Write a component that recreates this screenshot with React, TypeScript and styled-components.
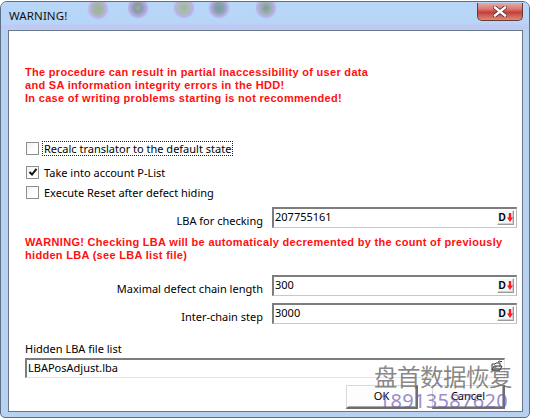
import React from "react";
import styled, { createGlobalStyle } from "styled-components";

const Global = createGlobalStyle`
  html, body { margin: 0; padding: 0; background: #ffffff; }
  body { width: 535px; height: 419px; overflow: hidden; font-family: "Noto Sans", "Open Sans", sans-serif; }
  * { box-sizing: border-box; }
`;

const Page = styled.div`
  position: relative;
  width: 535px;
  height: 419px;
  padding-top: 1px;
`;

const Window = styled.div`
  width: 530px;
  height: 417px;
  border: 1px solid #5d6f86;
  border-radius: 7px 7px 5px 5px;
  background: #b9d1f1;
  display: flex;
  flex-direction: column;
  padding: 0 6px 5px 7px;
  overflow: hidden;
`;

const TitleBar = styled.div`
  height: 28px;
  margin: 0 -6px 0 -7px;
  padding: 0 6px 0 8px;
  display: flex;
  align-items: flex-start;
  justify-content: space-between;
  background:
    radial-gradient(circle 11px at 97px 7px, #9fb29c 0, #a4b4a6 5px, #bdb4ee 9px, transparent 11px),
    radial-gradient(circle 11px at 137px 6px, #98ac9a 0, #8a9aa6 4px, #b8aeea 9px, transparent 11px),
    radial-gradient(circle 11px at 183px 6px, #a0b6a0 0, #a8bcb0 5px, #bab2ee 9px, transparent 11px),
    radial-gradient(circle 11px at 218px 6px, #7d97a6 0, #8aa2ac 5px, #b8b0ee 9px, transparent 11px),
    radial-gradient(circle 11px at 265px 6px, #7d97a6 0, #9ab0a6 5px, #bab0ee 9px, transparent 11px),
    linear-gradient(180deg, #b8d6f8 0%, #b7d5f7 75%, #c3c6f2 90%, #bcd0f2 100%);
`;

const Title = styled.span`
  margin-top: 6px;
  font-family: "Noto Sans", sans-serif;
  font-size: 11.5px;
  color: #111;
  letter-spacing: 0.1px;
`;

const CloseButton = styled.div`
  width: 46px;
  height: 18px;
  margin-top: 1px;
  border: 1px solid #6b3a36;
  border-top: none;
  border-radius: 0 0 5px 5px;
  background: linear-gradient(180deg, #e9a9a5 0%, #d87a72 35%, #c0403a 55%, #d46a5e 80%, #e08a6e 100%);
  display: flex;
  align-items: center;
  justify-content: center;
`;

const Client = styled.div`
  flex: 1;
  background: #ffffff;
  border: 1px solid #68788a;
  display: flex;
  flex-direction: column;
  padding: 0 0 0 16px;
`;

const RedText = styled.div<{ $top: number }>`
  margin-top: ${(p) => p.$top}px;
  font-family: "Liberation Sans", Arial, sans-serif;
  font-weight: bold;
  font-size: 11px;
  line-height: 13px;
  color: #ff1010;
  letter-spacing: 0.3px;
`;

const CheckRow = styled.div<{ $top: number }>`
  margin-top: ${(p) => p.$top}px;
  height: 20px;
  display: flex;
  align-items: center;
  gap: 3px;
`;

const Box = styled.div`
  width: 13px;
  height: 13px;
  margin-left: 1px;
  border: 1px solid #8e8f8f;
  background: linear-gradient(135deg, #f0f0f0 0%, #ffffff 60%);
  display: flex;
  align-items: center;
  justify-content: center;
`;

const Label = styled.span<{ $focus?: boolean }>`
  font-family: "Noto Sans", sans-serif;
  font-size: 11px;
  color: #000;
  padding: 0 1px;
  border: 1px dotted ${(p) => (p.$focus ? "#222" : "transparent")};
  line-height: 13px;
`;

const FieldRow = styled.div<{ $top: number }>`
  margin-top: ${(p) => p.$top}px;
  display: grid;
  grid-template-columns: 238px 245px;
  column-gap: 9px;
  align-items: center;
`;

const FieldLabel = styled.span`
  text-align: right;
  font-family: "Noto Sans", sans-serif;
  font-size: 11px;
  color: #000;
  padding-top: 6px;
`;

const Input = styled.div<{ $h?: number; $w?: number }>`
  height: ${(p) => p.$h ?? 21}px;
  ${(p) => (p.$w ? `width: ${p.$w}px;` : "")}
  background: #fff;
  border-top: 2px solid #7d7d7d;
  border-left: 2px solid #7d7d7d;
  border-right: 1px solid #b8b8b8;
  border-bottom: 1px solid #c8c8c8;
  display: flex;
  align-items: flex-start;
  justify-content: space-between;
  padding: 0 2px 0 1px;
`;

const InputText = styled.span`
  font-family: "Noto Sans", sans-serif;
  font-size: 11px;
  line-height: 15px;
  color: #000;
`;

const DButton = styled.div`
  width: 17px;
  height: 15px;
  margin-top: 1px;
  background: #f6f6f6;
  border-top: 1px solid #ffffff;
  border-left: 1px solid #ffffff;
  border-right: 1px solid #9a9a9a;
  border-bottom: 1px solid #9a9a9a;
  box-shadow: inset -1px -1px 0 #d0d0d0;
  display: flex;
  align-items: center;
  justify-content: center;
  gap: 1px;
`;

const DLetter = styled.span`
  font-family: "Liberation Sans", Arial, sans-serif;
  font-weight: bold;
  font-size: 10px;
  line-height: 10px;
  color: #000;
`;

const PlainLabel = styled.div<{ $top: number }>`
  margin-top: ${(p) => p.$top}px;
  font-family: "Noto Sans", sans-serif;
  font-size: 11px;
  line-height: 16px;
  color: #000;
`;

const FileInput = styled(Input)`
  margin-top: 1px;
  border-top: 2px solid #7d7d7d;
  border-left: 2px solid #7d7d7d;
  border-right: 1px solid #dfe6ee;
  border-bottom: 1px solid #dfe6ee;
  padding-left: 1px;
  padding-right: 1px;
`;

const ButtonBar = styled.div`
  width: 480px;
  margin-top: 7px;
  display: flex;
  justify-content: flex-end;
  gap: 14px;
`;

const Button = styled.div<{ $w: number }>`
  width: ${(p) => p.$w}px;
  height: 24px;
  background: #fdfdfd;
  border-top: 1px solid #d8d8d8;
  border-left: 1px solid #d8d8d8;
  border-right: 2px solid #6e6e6e;
  border-bottom: 2px solid #6e6e6e;
  box-shadow: inset 1px 1px 0 #ffffff, inset -1px -1px 0 #a8a8a8;
  display: flex;
  align-items: center;
  justify-content: center;
  font-family: "Noto Sans", sans-serif;
  font-size: 11px;
  color: #000;
  padding-bottom: 2px;
`;

const Watermark = styled.div`
  position: absolute;
  left: 374px;
  top: 361px;
  display: flex;
  flex-direction: column;
  align-items: flex-end;
  pointer-events: none;
`;

const WmCn = styled.span`
  font-family: "Noto Sans CJK SC", "Noto Sans", sans-serif;
  font-size: 23.5px;
  line-height: 30px;
  color: rgba(90, 90, 90, 0.72);
  letter-spacing: -0.5px;
`;

const WmNum = styled.span`
  margin-top: -2px;
  margin-right: 4px;
  font-family: "Noto Sans", sans-serif;
  font-size: 20px;
  line-height: 24px;
  color: rgba(110, 90, 180, 0.7);
  letter-spacing: 0.3px;
`;

const CloseIcon = () => (
  <svg width="14" height="11" viewBox="0 0 14 11">
    <path d="M2 1.5 L12 9.5 M12 1.5 L2 9.5" stroke="#5a2a2a" strokeWidth="4" strokeLinecap="square" />
    <path d="M2 1.5 L12 9.5 M12 1.5 L2 9.5" stroke="#ffffff" strokeWidth="2.4" strokeLinecap="square" />
  </svg>
);

const Check = () => (
  <svg width="10" height="10" viewBox="0 0 10 10">
    <path d="M1.5 5 L4 7.5 L8.5 1.8" stroke="#111" strokeWidth="2" fill="none" />
  </svg>
);

const RedArrow = () => (
  <svg width="6" height="9" viewBox="0 0 6 9">
    <rect x="1.8" y="0" width="2.4" height="5" fill="#ff1a1a" />
    <polygon points="0,4.5 6,4.5 3,9" fill="#ff1a1a" />
  </svg>
);

const FolderIcon = () => (
  <svg width="12" height="12" viewBox="0 0 12 12">
    <path d="M1 4 H4 L5 3 H9 V10 H1 Z" fill="#fff" stroke="#333" strokeWidth="1" />
    <path d="M1 10 L3 6 H11 L9 10 Z" fill="#e8e8e8" stroke="#333" strokeWidth="1" />
    <path d="M7 2 Q9 0 10 2 L11 1" fill="none" stroke="#333" strokeWidth="1" />
  </svg>
);

const DBtn = () => (
  <DButton>
    <DLetter>D</DLetter>
    <RedArrow />
  </DButton>
);

export default function App() {
  return (
    <Page>
      <Global />
      <Window>
        <TitleBar>
          <Title>WARNING!</Title>
          <CloseButton>
            <CloseIcon />
          </CloseButton>
        </TitleBar>
        <Client>
          <RedText $top={35}>
            The procedure can result in partial inaccessibility of user data
            <br />
            and SA information integrity errors in the HDD!
            <br />
            In case of writing problems starting is not recommended!
          </RedText>

          <CheckRow $top={33}>
            <Box />
            <Label $focus>Recalc translator to the default state</Label>
          </CheckRow>
          <CheckRow $top={4}>
            <Box>
              <Check />
            </Box>
            <Label>Take into account P-List</Label>
          </CheckRow>
          <CheckRow $top={0}>
            <Box />
            <Label>Execute Reset after defect hiding</Label>
          </CheckRow>

          <FieldRow $top={5}>
            <FieldLabel>LBA for checking</FieldLabel>
            <Input>
              <InputText>207755161</InputText>
              <DBtn />
            </Input>
          </FieldRow>

          <RedText $top={8}>
            WARNING! Checking LBA will be automaticaly decremented by the count of previously
            <br />
            hidden LBA (see LBA list file)
          </RedText>

          <FieldRow $top={13}>
            <FieldLabel>Maximal defect chain length</FieldLabel>
            <Input>
              <InputText>300</InputText>
              <DBtn />
            </Input>
          </FieldRow>

          <FieldRow $top={7}>
            <FieldLabel>Inter-chain step</FieldLabel>
            <Input>
              <InputText>3000</InputText>
              <DBtn />
            </Input>
          </FieldRow>

          <PlainLabel $top={17}>Hidden LBA file list</PlainLabel>
          <FileInput $w={480} $h={20}>
            <InputText>LBAPosAdjust.lba</InputText>
            <FolderIcon />
          </FileInput>

          <ButtonBar>
            <Button $w={72}>OK</Button>
            <Button $w={73}>Cancel</Button>
          </ButtonBar>
        </Client>
      </Window>
      <Watermark>
        <WmCn>盘首数据恢复</WmCn>
        <WmNum>18913587620</WmNum>
      </Watermark>
    </Page>
  );
}
